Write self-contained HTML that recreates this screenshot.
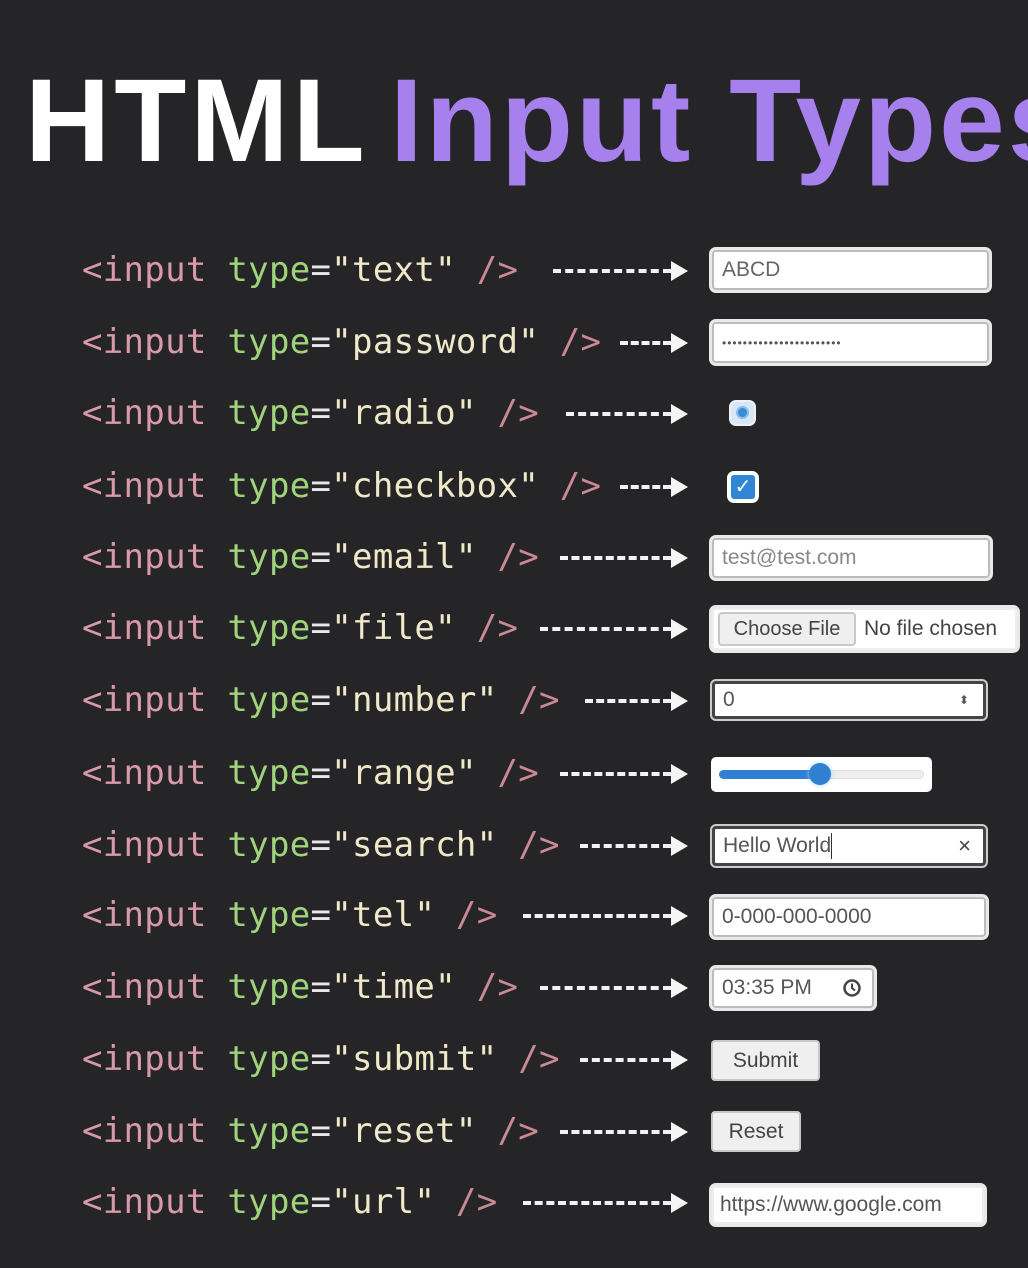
<!DOCTYPE html>
<html><head><meta charset="utf-8"><style>
*{margin:0;padding:0;box-sizing:border-box}
body{width:1028px;height:1268px;background:#252427;position:relative;overflow:hidden;font-family:"Liberation Sans",sans-serif}
.t{position:absolute;top:56px;font-weight:bold;font-size:118px;line-height:130px;white-space:nowrap}
.code{position:absolute;left:82px;font-family:"DejaVu Sans Mono","Liberation Mono",monospace;font-size:34px;line-height:40px;height:40px;white-space:pre;letter-spacing:0.3px}
.k{color:#d89aa8}.a{color:#9fd47c}.e{color:#e8e8e8}.s{color:#efe9c9}.c{color:#c98a94}
.ar{position:absolute;height:0;border-top:4px dashed #f2f2f2}
.ah{position:absolute;width:0;height:0;border-left:17px solid #f5f5f5;border-top:10px solid transparent;border-bottom:10px solid transparent}
.box{position:absolute;background:#fff;border:2px solid #bcbcbc;border-radius:4px;box-shadow:0 0 0 3px #e9e9e9;font-size:21px;color:#666;padding-left:8px;display:flex;align-items:center}
.btn{position:absolute;background:#efefef;border:2px solid #c8c8c8;border-radius:4px;font-size:21px;color:#444;display:flex;align-items:center;justify-content:center}
</style></head><body>
<div class="t" style="left:25px;color:#fff;letter-spacing:4px">HTML</div>
<div class="t" style="left:390px;color:#a680ec;letter-spacing:3px">Input Types</div>

<div class="code" style="top:250px"><span class="k">&lt;input</span> <span class="a">type</span><span class="e">=</span><span class="s">"text"</span> <span class="c">/&gt;</span></div>
<div class="code" style="top:322px"><span class="k">&lt;input</span> <span class="a">type</span><span class="e">=</span><span class="s">"password"</span> <span class="c">/&gt;</span></div>
<div class="code" style="top:393px"><span class="k">&lt;input</span> <span class="a">type</span><span class="e">=</span><span class="s">"radio"</span> <span class="c">/&gt;</span></div>
<div class="code" style="top:466px"><span class="k">&lt;input</span> <span class="a">type</span><span class="e">=</span><span class="s">"checkbox"</span> <span class="c">/&gt;</span></div>
<div class="code" style="top:537px"><span class="k">&lt;input</span> <span class="a">type</span><span class="e">=</span><span class="s">"email"</span> <span class="c">/&gt;</span></div>
<div class="code" style="top:608px"><span class="k">&lt;input</span> <span class="a">type</span><span class="e">=</span><span class="s">"file"</span> <span class="c">/&gt;</span></div>
<div class="code" style="top:680px"><span class="k">&lt;input</span> <span class="a">type</span><span class="e">=</span><span class="s">"number"</span> <span class="c">/&gt;</span></div>
<div class="code" style="top:753px"><span class="k">&lt;input</span> <span class="a">type</span><span class="e">=</span><span class="s">"range"</span> <span class="c">/&gt;</span></div>
<div class="code" style="top:825px"><span class="k">&lt;input</span> <span class="a">type</span><span class="e">=</span><span class="s">"search"</span> <span class="c">/&gt;</span></div>
<div class="code" style="top:895px"><span class="k">&lt;input</span> <span class="a">type</span><span class="e">=</span><span class="s">"tel"</span> <span class="c">/&gt;</span></div>
<div class="code" style="top:967px"><span class="k">&lt;input</span> <span class="a">type</span><span class="e">=</span><span class="s">"time"</span> <span class="c">/&gt;</span></div>
<div class="code" style="top:1039px"><span class="k">&lt;input</span> <span class="a">type</span><span class="e">=</span><span class="s">"submit"</span> <span class="c">/&gt;</span></div>
<div class="code" style="top:1111px"><span class="k">&lt;input</span> <span class="a">type</span><span class="e">=</span><span class="s">"reset"</span> <span class="c">/&gt;</span></div>
<div class="code" style="top:1182px"><span class="k">&lt;input</span> <span class="a">type</span><span class="e">=</span><span class="s">"url"</span> <span class="c">/&gt;</span></div>

<div class="ar" style="left:553px;width:118px;top:269px"></div><div class="ah" style="left:671px;top:261px"></div>
<div class="ar" style="left:620px;width:51px;top:341px"></div><div class="ah" style="left:671px;top:333px"></div>
<div class="ar" style="left:566px;width:105px;top:412px"></div><div class="ah" style="left:671px;top:404px"></div>
<div class="ar" style="left:620px;width:51px;top:485px"></div><div class="ah" style="left:671px;top:477px"></div>
<div class="ar" style="left:560px;width:111px;top:556px"></div><div class="ah" style="left:671px;top:548px"></div>
<div class="ar" style="left:540px;width:131px;top:627px"></div><div class="ah" style="left:671px;top:619px"></div>
<div class="ar" style="left:585px;width:86px;top:699px"></div><div class="ah" style="left:671px;top:691px"></div>
<div class="ar" style="left:560px;width:111px;top:772px"></div><div class="ah" style="left:671px;top:764px"></div>
<div class="ar" style="left:580px;width:91px;top:844px"></div><div class="ah" style="left:671px;top:836px"></div>
<div class="ar" style="left:523px;width:148px;top:914px"></div><div class="ah" style="left:671px;top:906px"></div>
<div class="ar" style="left:540px;width:131px;top:986px"></div><div class="ah" style="left:671px;top:978px"></div>
<div class="ar" style="left:580px;width:91px;top:1058px"></div><div class="ah" style="left:671px;top:1050px"></div>
<div class="ar" style="left:560px;width:111px;top:1130px"></div><div class="ah" style="left:671px;top:1122px"></div>
<div class="ar" style="left:523px;width:148px;top:1201px"></div><div class="ah" style="left:671px;top:1193px"></div>

<div class="box" style="left:712px;top:250px;width:277px;height:40px">ABCD</div>
<div class="box" style="left:712px;top:322px;width:277px;height:41px;font-size:12px;letter-spacing:1px;color:#555">•••••••••••••••••••••••</div>
<div style="position:absolute;left:729px;top:400px;width:27px;height:26px;background:#d6e8f7;border-radius:7px;border:2px solid #f0f0f0"><div style="position:absolute;left:5px;top:4px;width:13px;height:13px;border-radius:50%;background:#3a8ad6;border:2px solid #8cbde8"></div></div>
<div style="position:absolute;left:727px;top:471px;width:32px;height:32px;background:#fff;border-radius:7px"><div style="position:absolute;left:4px;top:4px;width:24px;height:24px;background:#2f86d4;border-radius:3px;color:#fff;font-size:20px;line-height:24px;text-align:center">✓</div></div>
<div class="box" style="left:712px;top:538px;width:278px;height:40px;color:#888">test@test.com</div>
<div class="box" style="left:712px;top:608px;width:305px;height:42px;border-color:#eee;padding-left:4px;color:#444;gap:8px"><div class="btn" style="position:static;width:138px;height:34px;font-size:20px">Choose File</div>No file chosen</div>
<div class="box" style="left:712px;top:681px;width:274px;height:38px;border:3px solid #444;box-shadow:0 0 0 2px #ccc;color:#555">0<span style="position:absolute;right:14px;font-size:12px;color:#555">⬍</span></div>
<div style="position:absolute;left:711px;top:757px;width:221px;height:35px;background:#fff;border-radius:5px"><div style="position:absolute;left:8px;top:13px;width:205px;height:9px;background:#eee;border-radius:5px;border:1px solid #ddd"></div><div style="position:absolute;left:8px;top:13px;width:110px;height:9px;background:#2f7fd3;border-radius:5px"></div><div style="position:absolute;left:98px;top:6px;width:22px;height:22px;background:#2f7fd3;border-radius:50%;box-shadow:0 0 4px #8fd0ff"></div></div>
<div class="box" style="left:712px;top:826px;width:274px;height:40px;border:3px solid #444;box-shadow:0 0 0 2px #ccc;color:#555">Hello World<span style="display:inline-block;width:1px;height:26px;background:#333"></span><span style="position:absolute;right:12px;font-size:22px;color:#444">×</span></div>
<div class="box" style="left:712px;top:897px;width:274px;height:40px;color:#555">0-000-000-0000</div>
<div class="box" style="left:712px;top:968px;width:162px;height:40px;color:#555">03:35 PM<svg style="position:absolute;right:10px" width="20" height="20" viewBox="0 0 20 20"><circle cx="10" cy="10" r="7.5" fill="none" stroke="#444" stroke-width="2.5"/><path d="M10 5.5V10L13 12.5" fill="none" stroke="#444" stroke-width="2"/></svg></div>
<div class="btn" style="left:711px;top:1040px;width:109px;height:41px">Submit</div>
<div class="btn" style="left:711px;top:1111px;width:90px;height:41px">Reset</div>
<div class="box" style="left:712px;top:1186px;width:272px;height:38px;border-color:#eee;color:#555;padding-left:6px">https://www.google.com</div>
</body></html>
